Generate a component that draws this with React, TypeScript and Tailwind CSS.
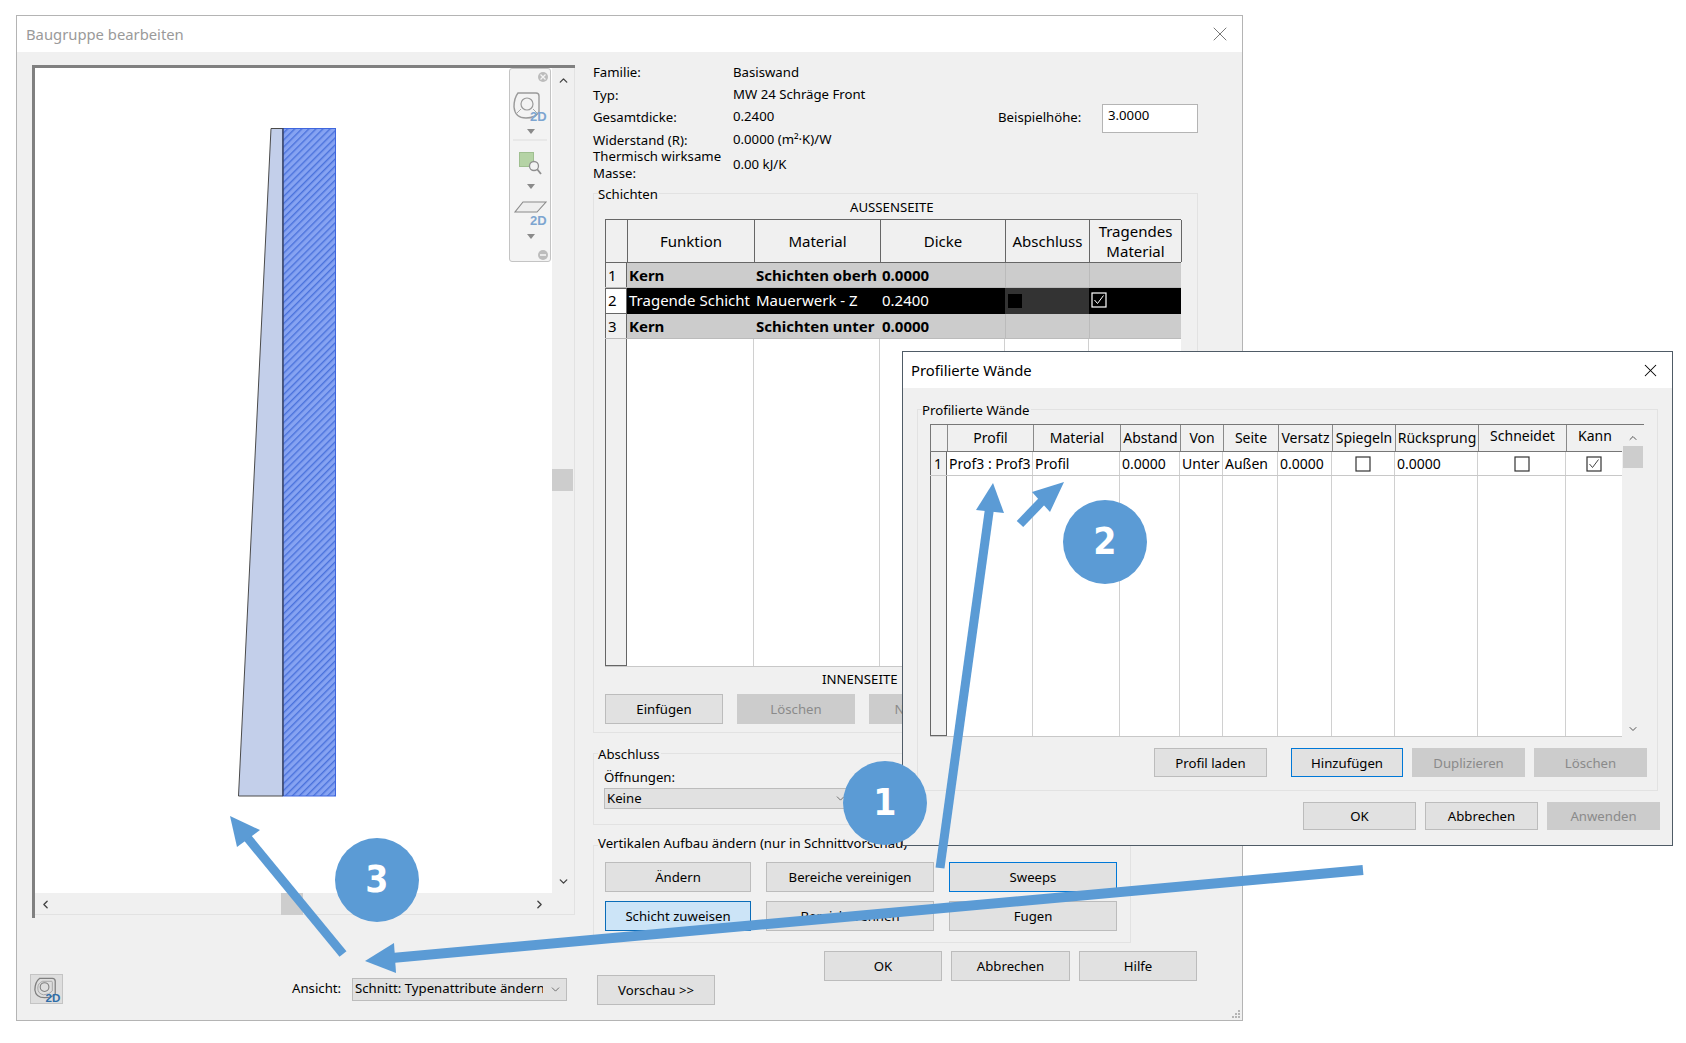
import { ChevronDown, ChevronLeft, ChevronRight, ChevronUp, X } from "lucide-react";

type BtnState = "normal" | "disabled" | "focus" | "pressed";

function Btn({ label, className = "", state = "normal" }: { label: string; className?: string; state?: BtnState }) {
  const look = {
    normal: "bg-[#e1e1e1] border-[#bcbcbc] text-black",
    disabled: "bg-[#cccccc] border-[#cccccc] text-[#8a8a8a]",
    focus: "bg-[#e1e1e1] border-[#0078d7] text-black",
    pressed: "bg-[#cce4f7] border-[#0a6cb8] text-black",
  }[state];
  return (
    <div className={`flex shrink-0 items-center justify-center overflow-hidden whitespace-nowrap border pt-[2px] ${look} ${className}`}>
      {label}
    </div>
  );
}

function Group({
  label,
  labelTop = "-top-[9px]",
  className = "",
  children,
}: {
  label: string;
  labelTop?: string;
  className?: string;
  children: React.ReactNode;
}) {
  return (
    <div className={`relative border border-[#e2e2e2] ${className}`}>
      <span className={`absolute left-[4px] whitespace-nowrap bg-[#f0f0f0] pr-px leading-[18px] ${labelTop}`}>{label}</span>
      {children}
    </div>
  );
}

function Check({ checked = false, white = false }: { checked?: boolean; white?: boolean }) {
  return (
    <svg width="16" height="16" viewBox="0 0 16 16" className="block">
      <rect x="1" y="1" width="14" height="14" fill="none" stroke={white ? "#ffffff" : "#333333"} strokeWidth="1.2" />
      {checked && <path d="M3.5 8 L6.5 11.5 L12.5 3.5" fill="none" stroke={white ? "#ffffff" : "#444444"} strokeWidth="1" />}
    </svg>
  );
}

function TwoDIcon({ className = "" }: { className?: string }) {
  return (
    <svg width="32" height="30" viewBox="0 0 32 30" className={className}>
      <path d="M9 4 H22 Q25 4 25 7 V20 Q22 24 14 24 Q5 24 4 16 Q4 8 9 4 Z" fill="none" stroke="#7f7f7f" strokeWidth="1.3" />
      <path d="M12 7 H21 Q22 7 22 8 V17 Q19 21 13 21 Q7 20 7 14 Q7 9 12 7 Z" fill="none" stroke="#a5a5a5" strokeWidth="1" />
      <circle cx="14" cy="13" r="4.5" fill="none" stroke="#7f7f7f" strokeWidth="1.1" />
      <text x="15" y="28" fontSize="12" fontWeight="700" fill="#2f6ea8" fontFamily="'Liberation Sans', sans-serif">2D</text>
    </svg>
  );
}

function NavWidget() {
  return (
    <div className="absolute left-[474px] top-0 h-[194px] w-[42px] rounded-[3px] border border-[#c4c4c4] bg-[#f3f3f3]">
      <svg width="41" height="194" viewBox="0 0 41 194" className="block">
        <circle cx="33" cy="8" r="5" fill="#bcbcbc" />
        <path d="M30.5 5.5 L35.5 10.5 M35.5 5.5 L30.5 10.5" stroke="#f3f3f3" strokeWidth="1.3" />
        <path d="M8 24 H26 Q29 24 29 27 V43 Q25 49 16 49 Q5 49 4 38 Q4 29 8 24 Z" fill="none" stroke="#9a9a9a" strokeWidth="1.4" />
        <circle cx="17" cy="35" r="6" fill="none" stroke="#9a9a9a" strokeWidth="1.2" />
        <path d="M11 40 L6 45 M23 40 L27 44" stroke="#a8a8a8" strokeWidth="1" />
        <text x="20" y="52" fontSize="13" fontWeight="700" fill="#7da5d0" fontFamily="'Liberation Sans', sans-serif">2D</text>
        <path d="M17 60 H25 L21 65 Z" fill="#8a8a8a" />
        <path d="M3 71 H37" stroke="#dddddd" strokeWidth="1" />
        <rect x="9.5" y="83.5" width="14" height="14" fill="#b5d3a5" stroke="#9fbf90" />
        <circle cx="24" cy="97" r="4.5" fill="#f3f3f3" stroke="#8f8f8f" strokeWidth="1.3" />
        <path d="M27 100 L31 105" stroke="#8f8f8f" strokeWidth="1.8" />
        <path d="M17 115 H25 L21 120 Z" fill="#8a8a8a" />
        <path d="M13 133 H36 L27 143 H5 Z" fill="#eeeeee" stroke="#8a8a8a" strokeWidth="1.1" />
        <text x="20" y="156" fontSize="13" fontWeight="700" fill="#7da5d0" fontFamily="'Liberation Sans', sans-serif">2D</text>
        <path d="M17 165 H25 L21 170 Z" fill="#8a8a8a" />
        <circle cx="33" cy="186" r="5" fill="#bcbcbc" />
        <path d="M30 186 H36" stroke="#f3f3f3" strokeWidth="1.6" />
      </svg>
    </div>
  );
}

function Preview() {
  return (
    <div className="ml-[2px] flex h-[853px] w-[543px] flex-col border-l-[3px] border-t-[3px] border-[#808080]">
      <div className="flex h-[825px]">
        <div className="relative w-[517px] bg-white">
          <svg width="98" height="669" viewBox="0 0 98 669" className="ml-[203px] mt-[60px] block">
            <defs>
              <pattern id="hatch" width="5" height="5" patternUnits="userSpaceOnUse" patternTransform="rotate(45)">
                <rect width="5" height="5" fill="#86a3f2" />
                <rect width="1.4" height="5" fill="#4a72dc" />
              </pattern>
            </defs>
            <polygon points="33,0.5 45,0.5 45,668 0.5,668" fill="#c3cfea" stroke="#4a4a4a" strokeWidth="1" />
            <rect x="45" y="0.5" width="52.5" height="667.5" fill="url(#hatch)" stroke="#3f66dd" strokeWidth="1" />
            <path d="M45 0 V668" stroke="#333333" strokeWidth="1" />
          </svg>
          <NavWidget />
        </div>
        <div className="flex w-[23px] flex-col items-center border-r border-[#e2e2e2]">
          <ChevronUp size={13} strokeWidth={2.5} className="mt-[6px] text-[#444444]" />
          <div className="mt-[382px] h-[22px] w-[21px] self-start bg-[#cdcdcd]" />
          <ChevronDown size={13} strokeWidth={2.5} className="mt-[384px] text-[#444444]" />
        </div>
      </div>
      <div className="flex h-[22px] items-center border-b border-r border-[#e2e2e2]">
        <ChevronLeft size={13} strokeWidth={2.5} className="ml-[4px] mt-[2px] text-[#444444]" />
        <div className="ml-[229px] h-[22px] w-[22px] bg-[#cdcdcd]" />
        <ChevronRight size={13} strokeWidth={2.5} className="ml-[230px] mt-[2px] text-[#444444]" />
      </div>
    </div>
  );
}

function InfoRow({ label, value, className = "" }: { label: string; value: string; className?: string }) {
  return (
    <div className={`flex items-center ${className}`}>
      <span className="w-[140px] shrink-0 leading-[17px]">{label}</span>
      <span>{value}</span>
    </div>
  );
}

function LayerTable() {
  const rowCols = "grid grid-cols-[22px_127px_126px_125px_84px_92px]";
  const headCell = "flex items-center justify-center border-r border-[#666666] text-center";
  const boldRow = `${rowCols} h-[25px] items-center bg-[#cccccc] font-bold border-b border-[#bbbbbb]`;
  return (
    <div className="ml-[11px] flex h-[448px] w-[576px] flex-col text-[15px] leading-[20px]">
      <div className={`${rowCols} h-[44px] border-b border-l border-t border-[#666666] bg-[#f0f0f0]`}>
        <div className={headCell} />
        <div className={headCell}>Funktion</div>
        <div className={headCell}>Material</div>
        <div className={headCell}>Dicke</div>
        <div className={headCell}>Abschluss</div>
        <div className={headCell}>
          Tragendes
          <br />
          Material
        </div>
      </div>
      <div className={boldRow}>
        <div className="flex h-full items-center border-l border-r border-[#666666] bg-[#f0f0f0] pl-[2px] font-normal">1</div>
        <div className="pl-[2px]">Kern</div>
        <div className="overflow-hidden whitespace-nowrap pl-[2px]">Schichten oberh</div>
        <div className="pl-[2px]">0.0000</div>
        <div className="h-full border-l border-[#bbbbbb]" />
        <div className="h-full border-l border-[#bbbbbb]" />
      </div>
      <div className={`${rowCols} h-[26px] items-center bg-black pb-[2px] text-white`}>
        <div className="-mb-[2px] flex h-[26px] items-center border border-[#666666] bg-white pb-[2px] pl-[2px] text-black">2</div>
        <div className="overflow-hidden whitespace-nowrap pl-[2px]">Tragende Schicht</div>
        <div className="pl-[2px]">Mauerwerk - Z</div>
        <div className="pl-[2px]">0.2400</div>
        <div className="-mb-[2px] flex h-[26px] items-center bg-[#333333] pl-[3px]">
          <div className="h-[14px] w-[14px] bg-black" />
        </div>
        <div className="pl-[2px]">
          <Check checked white />
        </div>
      </div>
      <div className={boldRow}>
        <div className="flex h-full items-center border-l border-r border-[#666666] bg-[#f0f0f0] pl-[2px] font-normal">3</div>
        <div className="pl-[2px]">Kern</div>
        <div className="overflow-hidden whitespace-nowrap pl-[2px]">Schichten unter</div>
        <div className="pl-[2px]">0.0000</div>
        <div className="h-full border-l border-[#bbbbbb]" />
        <div className="h-full border-l border-[#bbbbbb]" />
      </div>
      <div className={`${rowCols} flex-1 border-b border-[#c8c8c8] bg-white`}>
        <div className="border-b border-l border-r border-[#666666] bg-[#f0f0f0]" />
        <div className="border-r border-[#d0d0d0]" />
        <div className="border-r border-[#d0d0d0]" />
        <div className="border-r border-[#d0d0d0]" />
        <div className="border-r border-[#d0d0d0]" />
        <div />
      </div>
    </div>
  );
}

function MainWindow() {
  return (
    <div className="absolute left-[16px] top-[15px] flex h-[1006px] w-[1227px] flex-col border border-[#b4b4b4] bg-white">
      <div className="flex h-[36px] shrink-0 items-center justify-between pl-[9px] pr-[10px] text-[14.8px] text-[#9a9a9a]">
        <span>Baugruppe bearbeiten</span>
        <X size={24} strokeWidth={1} className="text-[#777777]" />
      </div>
      <div className="relative flex flex-1 bg-[#f0f0f0]">
        <div className="w-[576px] shrink-0 pl-[13px] pt-[13px]">
          <Preview />
          <div className="mt-[56px] flex h-[30px] items-center">
            <div className="flex h-[30px] w-[33px] items-center justify-center border border-[#c4c4c4] bg-[#dedede]">
              <TwoDIcon />
            </div>
            <span className="ml-[229px] w-[60px]">Ansicht:</span>
            <div className="flex h-[23px] w-[215px] items-center border border-[#bcbcbc] bg-[#e1e1e1]">
              <span className="ml-[2px] w-[188px] overflow-hidden whitespace-nowrap">Schnitt: Typenattribute ändern</span>
              <ChevronDown size={13} strokeWidth={1.2} className="ml-[6px] text-[#333333]" />
            </div>
          </div>
        </div>
        <div className="flex-1 pt-[9px]">
          <div className="flex h-[122px]">
            <div className="flex w-[405px] flex-col">
              <InfoRow label="Familie:" value="Basiswand" className="h-[23px]" />
              <InfoRow label="Typ:" value="MW 24 Schräge Front" className="h-[22px]" />
              <InfoRow label="Gesamtdicke:" value="0.2400" className="h-[22px]" />
              <InfoRow label="Widerstand (R):" value="0.0000 (m²·K)/W" className="h-[24px]" />
              <InfoRow label="Thermisch wirksame Masse:" value="0.00 kJ/K" className="-mt-[4px] h-[33px]" />
            </div>
            <div className="mt-[43px] flex h-[29px] items-center">
              <span className="w-[104px] -translate-y-px">Beispielhöhe:</span>
              <div className="h-[29px] w-[96px] border border-[#b4b4b4] bg-white pl-[5px] leading-[20px]">3.0000</div>
            </div>
          </div>
          <Group label="Schichten" className="mt-[10px] h-[540px] w-[605px]">
            <div className="mt-[4px] h-[18px] pl-[256px] leading-[18px]">AUSSENSEITE</div>
            <div className="mt-[3px]">
              <LayerTable />
            </div>
            <div className="mt-[3px] h-[18px] pl-[228px] leading-[18px]">INNENSEITE</div>
            <div className="ml-[11px] mt-[6px] flex gap-[14px]">
              <Btn label="Einfügen" className="h-[30px] w-[118px]" />
              <Btn label="Löschen" state="disabled" className="h-[30px] w-[118px]" />
              <Btn label="Nach oben" state="disabled" className="h-[30px] w-[118px]" />
            </div>
          </Group>
          <Group label="Abschluss" className="mt-[20px] h-[72px] w-[605px]">
            <div className="ml-[10px] mt-[14px] h-[18px] leading-[18px]">Öffnungen:</div>
            <div className="ml-[10px] mt-[2px] flex h-[21px] w-[246px] items-center justify-between border border-[#bcbcbc] bg-[#e1e1e1] pl-[2px] pr-[2px]">
              Keine
              <ChevronDown size={13} strokeWidth={1.2} className="text-[#333333]" />
            </div>
          </Group>
          <Group label="Vertikalen Aufbau ändern (nur in Schnittvorschau)" labelTop="-top-[12px]" className="mt-[20px] h-[98px] w-[538px]">
            <div className="ml-[11px] mt-[16px] flex flex-col gap-[9px]">
              <div className="flex gap-[15px]">
                <Btn label="Ändern" className="h-[30px] w-[146px]" />
                <Btn label="Bereiche vereinigen" className="h-[30px] w-[168px]" />
                <Btn label="Sweeps" state="focus" className="h-[30px] w-[168px]" />
              </div>
              <div className="flex gap-[15px]">
                <Btn label="Schicht zuweisen" state="pressed" className="h-[30px] w-[146px]" />
                <Btn label="Bereich trennen" className="h-[30px] w-[168px]" />
                <Btn label="Fugen" className="h-[30px] w-[168px]" />
              </div>
            </div>
          </Group>
          <div className="mt-[8px] flex items-start">
            <Btn label="Vorschau >>" className="ml-[4px] mt-[24px] h-[30px] w-[118px]" />
            <div className="ml-[109px] flex gap-[9px]">
              <Btn label="OK" className="h-[30px] w-[118px]" />
              <Btn label="Abbrechen" className="h-[30px] w-[119px]" />
              <Btn label="Hilfe" className="h-[30px] w-[118px]" />
            </div>
          </div>
        </div>
        <div className="absolute bottom-[2px] right-[2px] grid grid-cols-3 gap-px">
          <span className="h-[2px] w-[2px]" />
          <span className="h-[2px] w-[2px]" />
          <span className="h-[2px] w-[2px] bg-[#b5b5b5]" />
          <span className="h-[2px] w-[2px]" />
          <span className="h-[2px] w-[2px] bg-[#b5b5b5]" />
          <span className="h-[2px] w-[2px] bg-[#b5b5b5]" />
          <span className="h-[2px] w-[2px] bg-[#b5b5b5]" />
          <span className="h-[2px] w-[2px] bg-[#b5b5b5]" />
          <span className="h-[2px] w-[2px] bg-[#b5b5b5]" />
        </div>
      </div>
    </div>
  );
}

function ProfileTable() {
  const cols = "grid grid-cols-[17px_86px_87px_60px_43px_55px_54px_63px_83px_88px_56px]";
  const head = "flex items-center justify-center overflow-hidden whitespace-nowrap border-r border-[#8a8a8a]";
  const cell = "flex h-full items-center overflow-hidden whitespace-nowrap border-r border-[#d0d0d0] pl-[2px]";
  const mark = "flex h-full items-center justify-center border-r border-[#d0d0d0]";
  const blank = "border-r border-[#d0d0d0]";
  return (
    <div className="ml-[12px] mt-[14px] flex h-[313px] w-[714px] text-[14px] leading-[18px]">
      <div className="flex w-[692px] flex-col">
        <div className={`${cols} h-[28px] border-b border-l border-t border-[#777777] bg-[#f0f0f0]`}>
          <div className={head} />
          <div className={head}>Profil</div>
          <div className={head}>Material</div>
          <div className={head}>Abstand</div>
          <div className={head}>Von</div>
          <div className={head}>Seite</div>
          <div className={head}>Versatz</div>
          <div className={head}>Spiegeln</div>
          <div className={head}>Rücksprung</div>
          <div className="overflow-hidden border-r border-[#8a8a8a] text-center leading-[22px]">
            Schneidet
            <br />
            Wand
          </div>
          <div className="overflow-hidden text-center leading-[22px]">
            Kann
            <br />
            verbinden
          </div>
        </div>
        <div className={`${cols} h-[24px] items-center border-b border-[#c8c8c8] bg-white`}>
          <div className="flex h-full items-center border-l border-r border-[#666666] bg-[#f0f0f0] pl-[3px]">1</div>
          <div className={cell}>Prof3 : Prof3</div>
          <div className={cell}>Profil</div>
          <div className={cell}>0.0000</div>
          <div className={cell}>Unter</div>
          <div className={cell}>Außen</div>
          <div className={cell}>0.0000</div>
          <div className={mark}>
            <Check />
          </div>
          <div className={cell}>0.0000</div>
          <div className={mark}>
            <Check />
          </div>
          <div className="flex h-full items-center justify-center">
            <Check checked />
          </div>
        </div>
        <div className={`${cols} flex-1 border-b border-[#c8c8c8] bg-white`}>
          <div className="border-b border-l border-r border-[#666666] bg-[#f0f0f0]" />
          <div className={blank} />
          <div className={blank} />
          <div className={blank} />
          <div className={blank} />
          <div className={blank} />
          <div className={blank} />
          <div className={blank} />
          <div className={blank} />
          <div className={blank} />
          <div />
        </div>
      </div>
      <div className="flex w-[22px] flex-col items-center border-t border-[#777777]">
        <ChevronUp size={12} strokeWidth={2} className="mt-[7px] text-[#555555]" />
        <div className="mt-[2px] h-[22px] w-[20px] bg-[#cdcdcd]" />
        <ChevronDown size={12} strokeWidth={2} className="mt-[255px] text-[#555555]" />
      </div>
    </div>
  );
}

function ProfileDialog() {
  return (
    <div className="absolute left-[902px] top-[351px] flex h-[495px] w-[771px] flex-col border border-[#4f5b66] bg-white">
      <div className="flex h-[36px] shrink-0 items-center justify-between pl-[8px] pr-[11px] text-[14.8px]">
        <span>Profilierte Wände</span>
        <X size={21} strokeWidth={1.2} />
      </div>
      <div className="flex-1 bg-[#f0f0f0] pt-[21px]">
        <Group label="Profilierte Wände" className="ml-[14px] h-[382px] w-[741px]">
          <ProfileTable />
          <div className="mt-[11px] flex justify-end pr-[10px]">
            <Btn label="Profil laden" className="h-[29px] w-[113px]" />
            <Btn label="Hinzufügen" state="focus" className="ml-[24px] h-[29px] w-[112px]" />
            <Btn label="Duplizieren" state="disabled" className="ml-[9px] h-[29px] w-[113px]" />
            <Btn label="Löschen" state="disabled" className="ml-[9px] h-[29px] w-[113px]" />
          </div>
        </Group>
        <div className="mt-[11px] flex justify-end gap-[9px] pr-[12px]">
          <Btn label="OK" className="h-[28px] w-[113px]" />
          <Btn label="Abbrechen" className="h-[28px] w-[113px]" />
          <Btn label="Anwenden" state="disabled" className="h-[28px] w-[113px]" />
        </div>
      </div>
    </div>
  );
}

function Badge({ n, className }: { n: number; className: string }) {
  return (
    <div className={`absolute flex h-[84px] w-[84px] items-center justify-center rounded-full bg-[#5b9bd5] text-[37px] font-bold text-white [font-family:'DejaVu_Sans',sans-serif] ${className}`}>
      <span className="scale-x-90">{n}</span>
    </div>
  );
}

function Arrows() {
  const blue = "#5b9bd5";
  return (
    <svg width="1686" height="1043" viewBox="0 0 1686 1043" className="pointer-events-none absolute left-0 top-0">
      <path d="M940 868 L990 505" stroke={blue} strokeWidth="9" />
      <polygon points="993,483 976,510 1004,513" fill={blue} />
      <path d="M1020 524 L1044 499" stroke={blue} strokeWidth="9" />
      <polygon points="1064,482 1032,492 1050,512" fill={blue} />
      <path d="M1363 870 L392 958" stroke={blue} strokeWidth="10" />
      <polygon points="365,961 394,943 396,973" fill={blue} />
      <path d="M343 954 L246 836" stroke={blue} strokeWidth="9" />
      <polygon points="230,816 260,830 237,847" fill={blue} />
    </svg>
  );
}

export default function App() {
  return (
    <div className="relative h-[1043px] w-[1686px] overflow-hidden bg-white text-[13.2px] text-black [font-family:'Noto_Sans',sans-serif]">
      <MainWindow />
      <ProfileDialog />
      <Arrows />
      <Badge n={1} className="left-[843px] top-[761px]" />
      <Badge n={2} className="left-[1063px] top-[500px]" />
      <Badge n={3} className="left-[335px] top-[838px]" />
    </div>
  );
}
